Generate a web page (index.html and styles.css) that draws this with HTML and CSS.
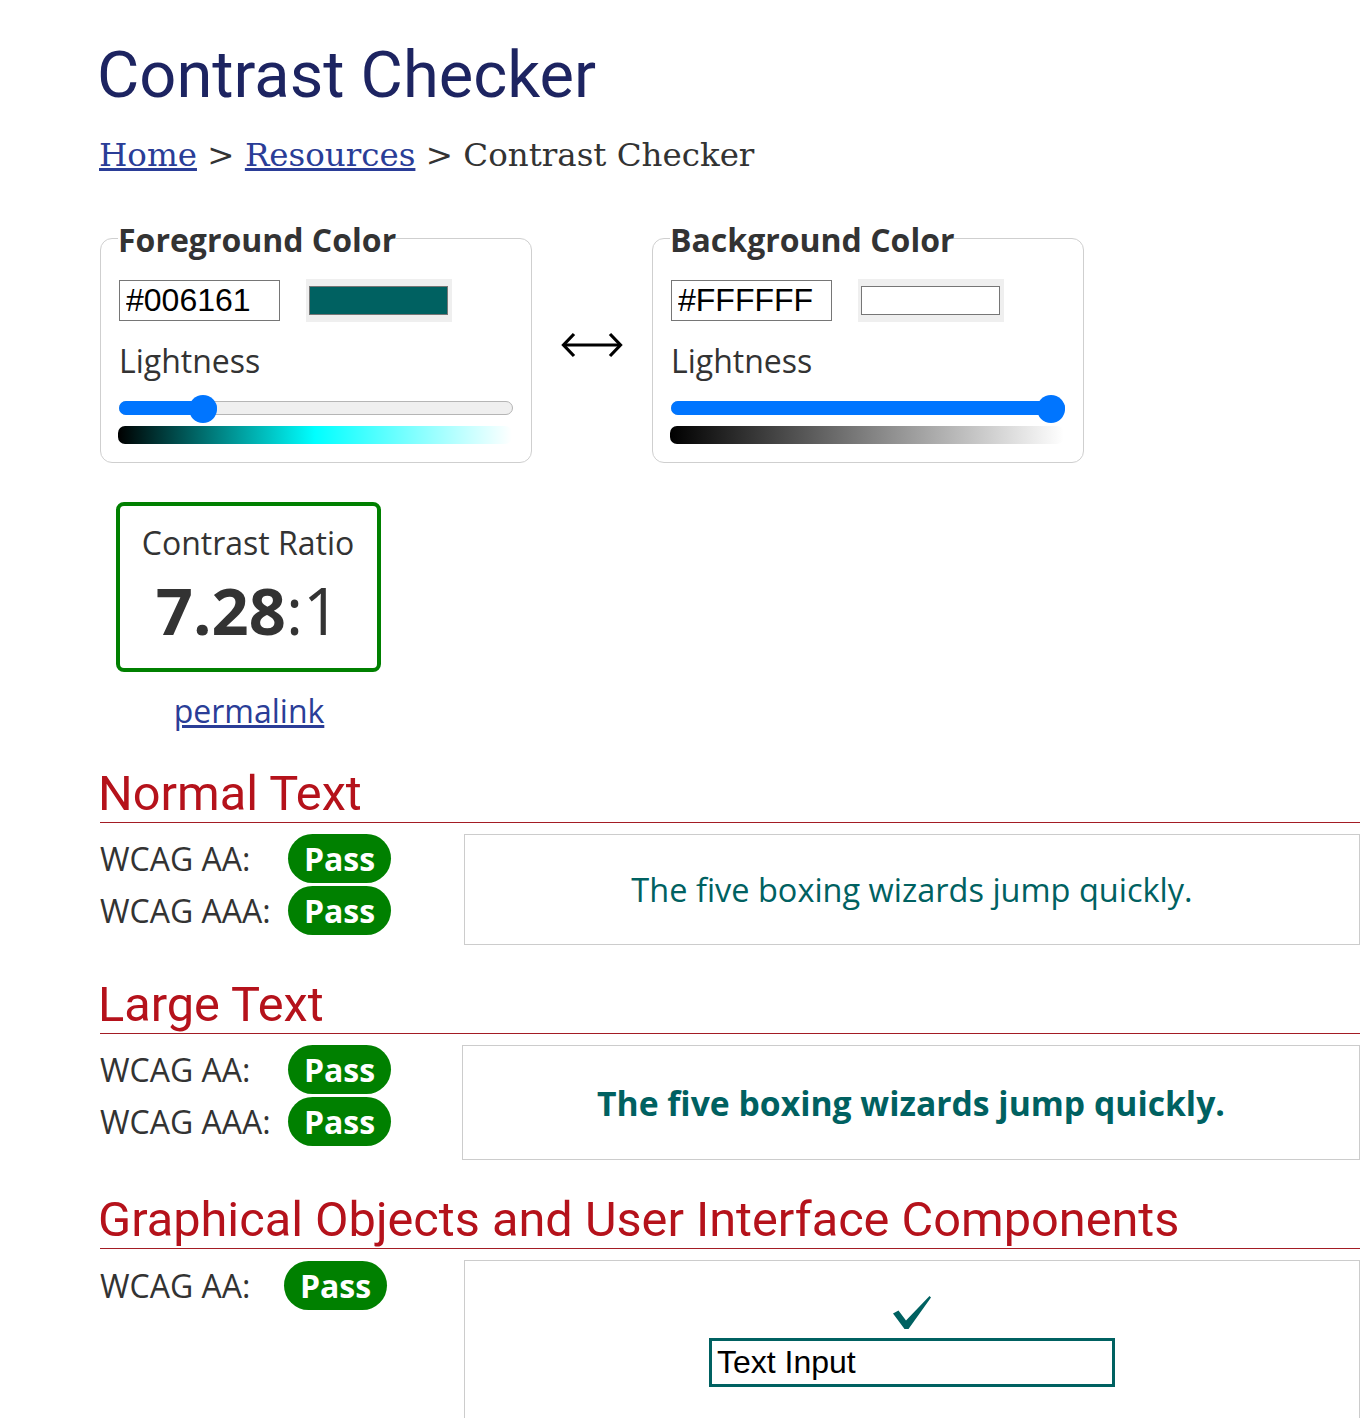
FILE: index.html
```html
<!DOCTYPE html>
<html lang="en">
<head>
<meta charset="utf-8">
<title>Contrast Checker</title>
<link rel="stylesheet" href="styles.css">
</head>
<body>
<main class="page">
  <h1 class="title">Contrast Checker</h1>
  <nav class="crumbs"><a href="#">Home</a> &gt; <a href="#">Resources</a> &gt; Contrast Checker</nav>

  <div class="pickers">
    <fieldset class="picker">
      <legend>Foreground Color</legend>
      <div class="hexrow">
        <input class="hex" type="text" value="#006161" aria-label="Foreground hex">
        <span class="swatch-wrap"><span class="swatch swatch-fg"></span></span>
      </div>
      <div class="light-label">Lightness</div>
      <div class="slider">
        <div class="track"></div>
        <div class="fill" style="width: 98px"></div>
        <div class="thumb" style="left: 70px"></div>
      </div>
      <div class="grad grad-fg"></div>
    </fieldset>

    <div class="swap">
      <svg width="62" height="28" viewBox="0 0 62 28" aria-label="swap colors">
        <path d="M3 14 H59" stroke="#000" stroke-width="3" fill="none"/>
        <path d="M13 3 L2.5 14 L13 25" stroke="#000" stroke-width="3.2" fill="none" stroke-linejoin="miter"/>
        <path d="M49 3 L59.5 14 L49 25" stroke="#000" stroke-width="3.2" fill="none" stroke-linejoin="miter"/>
      </svg>
    </div>

    <fieldset class="picker">
      <legend>Background Color</legend>
      <div class="hexrow">
        <input class="hex" type="text" value="#FFFFFF" aria-label="Background hex">
        <span class="swatch-wrap"><span class="swatch swatch-bg"></span></span>
      </div>
      <div class="light-label">Lightness</div>
      <div class="slider">
        <div class="track"></div>
        <div class="fill" style="width: 394px"></div>
        <div class="thumb" style="left: 366px"></div>
      </div>
      <div class="grad grad-bg"></div>
    </fieldset>
  </div>

  <div class="ratio-col">
    <div class="ratio">
      <div class="ratio-label">Contrast Ratio</div>
      <div class="ratio-value"><b>7.28</b>:1</div>
    </div>
    <a class="permalink" href="#">permalink</a>
  </div>

  <section class="result">
    <h2>Normal Text</h2>
    <div class="result-row">
      <div class="grades">
        <div class="grade"><span class="grade-label">WCAG AA:</span><span class="pass">Pass</span></div>
        <div class="grade"><span class="grade-label">WCAG AAA:</span><span class="pass">Pass</span></div>
      </div>
      <div class="sample sample-normal">The five boxing wizards jump quickly.</div>
    </div>
  </section>

  <section class="result">
    <h2>Large Text</h2>
    <div class="result-row">
      <div class="grades">
        <div class="grade"><span class="grade-label">WCAG AA:</span><span class="pass">Pass</span></div>
        <div class="grade"><span class="grade-label">WCAG AAA:</span><span class="pass">Pass</span></div>
      </div>
      <div class="sample sample-large">The five boxing wizards jump quickly.</div>
    </div>
  </section>

  <section class="result">
    <h2>Graphical Objects and User Interface Components</h2>
    <div class="result-row">
      <div class="grades grades-gfx">
        <div class="grade"><span class="grade-label">WCAG AA:</span><span class="pass">Pass</span></div>
      </div>
      <div class="sample sample-gfx">
        <svg class="check" width="40" height="36" viewBox="0 0 40 36" aria-hidden="true">
          <path d="M1 18.5 L6.5 15.5 L14 25.5 L37.5 1 L39 2.5 L16.5 34 L12.5 34 Z" fill="#006161"/>
        </svg>
        <div class="fake-input">Text Input</div>
      </div>
    </div>
  </section>
</main>
</body>
</html>
```

FILE: styles.css
```css
html, body {
  margin: 0;
  padding: 0;
  background: #fff;
  overflow-x: hidden;
}

body {
  font-family: "Open Sans", "DejaVu Sans", sans-serif;
  color: #333;
}

.page {
  width: 1260px;
  padding: 36px 0 0 100px;
}

.title {
  margin: 0;
  text-indent: -3px;
  font-family: Roboto, "Liberation Sans", sans-serif;
  font-weight: 400;
  font-size: 65px;
  line-height: 78px;
  color: #1d2461;
}

.crumbs {
  margin-top: 20px;
  font-family: "DejaVu Serif", "Liberation Serif", serif;
  font-size: 32.5px;
  line-height: 42px;
  color: #333;
  text-indent: -1px;
}

.crumbs a {
  color: #2a3d97;
}

a {
  color: #2a3d97;
}

.pickers {
  display: flex;
  align-items: stretch;
  margin-top: 42px;
}

.picker {
  width: 432px;
  box-sizing: border-box;
  margin: 0;
  padding: 21px 18px 18px 18px;
  border: 1px solid #cfcfcf;
  border-radius: 12px;
  min-width: 0;
}

.picker legend {
  padding: 4px 0 0 0;
  margin-left: -1px;
  font-weight: 700;
  font-size: 32px;
  line-height: 36px;
  color: #333;
}

.hexrow {
  display: flex;
  align-items: center;
  gap: 26px;
}

.hex {
  width: 161px;
  height: 41px;
  box-sizing: border-box;
  margin: 0;
  padding: 0 6px;
  border: 1px solid #767676;
  border-radius: 0;
  font-family: "Liberation Sans", Arial, sans-serif;
  font-size: 32px;
  color: #000;
  background: #fff;
  outline: none;
}

.swatch-wrap {
  display: flex;
  width: 146px;
  height: 43px;
  box-sizing: border-box;
  padding: 7px 4px 7px 3px;
  background: #efefef;
}

.swatch {
  flex: 1;
  border: 1px solid #767676;
}

.swatch-fg { background: #006161; }
.swatch-bg { background: #ffffff; }

.light-label {
  margin-top: 18px;
  font-size: 32px;
  line-height: 42px;
  color: #333;
}

.slider {
  position: relative;
  margin-top: 13px;
  height: 28px;
  width: 394px;
}

.track {
  position: absolute;
  left: 0;
  right: 0;
  top: 6px;
  height: 14px;
  box-sizing: border-box;
  border: 1px solid #b5b5b5;
  border-radius: 7px;
  background: #efefef;
}

.fill {
  position: absolute;
  left: 0;
  top: 6px;
  height: 14px;
  border-radius: 7px;
  background: #0075ff;
}

.thumb {
  position: absolute;
  top: 0;
  width: 28px;
  height: 28px;
  border-radius: 50%;
  background: #0075ff;
}

.grad {
  margin-top: 3px;
  height: 18px;
  width: 394px;
  margin-left: -1px;
  border-radius: 7px;
}

.grad-fg {
  background: linear-gradient(to right, #000 0%, #00b3b3 35%, #00ffff 50%, #80ffff 75%, #fff 100%);
}

.grad-bg {
  background: linear-gradient(to right, #000, #fff);
}

.swap {
  width: 120px;
  display: flex;
  align-items: center;
  justify-content: center;
}

.swap svg {
  margin-top: 9px;
}

.ratio-col {
  width: 298px;
  display: flex;
  flex-direction: column;
  align-items: center;
  margin-top: 39px;
}

.ratio {
  width: 265px;
  height: 170px;
  flex-shrink: 0;
  box-sizing: border-box;
  border: 4px solid #008000;
  border-radius: 8px;
  text-align: center;
  margin-left: -2px;
}

.ratio-label {
  margin-top: 16px;
  font-size: 32px;
  line-height: 42px;
}

.ratio-value {
  margin-top: 6px;
  font-size: 65px;
  line-height: 80px;
  color: #333;
}

.ratio-value b {
  font-weight: 700;
}

.permalink {
  margin-top: 18px;
  font-size: 32px;
  line-height: 42px;
}

.result h2 {
  margin: 0;
  text-indent: -2px;
  font-family: Roboto, "Liberation Sans", sans-serif;
  font-weight: 400;
  font-size: 48.7px;
  line-height: 57px;
  color: #b5121b;
  border-bottom: 1px solid #a31c24;
}

.result {
  margin-top: 31px;
}

.result:first-of-type {
  margin-top: 33px;
}

.result-row {
  display: flex;
  align-items: flex-start;
  margin-top: 11px;
}

.grades {
  width: 364px;
  display: flex;
  flex-direction: column;
  gap: 3px;
}

.grade {
  display: flex;
  align-items: center;
  height: 49px;
}

.grade-label {
  width: 188px;
  font-size: 32px;
  line-height: 42px;
  color: #333;
}

.pass {
  display: inline-flex;
  align-items: center;
  justify-content: center;
  width: 103px;
  height: 49px;
  border-radius: 25px;
  background: #008000;
  color: #fff;
  font-weight: 700;
  font-size: 32px;
}

.grades-gfx .grade-label {
  width: 184px;
}

.grades-gfx {
  padding-top: 1px;
}

.sample {
  flex: 1;
  box-sizing: border-box;
  border: 1px solid #cccccc;
  display: flex;
  align-items: center;
  justify-content: center;
  color: #006161;
}

.sample-normal {
  height: 111px;
  font-size: 32.5px;
}

.sample-large {
  height: 115px;
  margin-left: -2px;
  font-size: 33.7px;
  font-weight: 700;
}

.sample-gfx {
  height: 200px;
  flex-direction: column;
  justify-content: flex-start;
  padding-top: 34px;
}

.check {
  display: block;
}

.fake-input {
  margin-top: 7px;
  width: 406px;
  height: 49px;
  box-sizing: border-box;
  border: 3px solid #006161;
  padding-left: 5px;
  font-family: "Liberation Sans", Arial, sans-serif;
  font-size: 32px;
  line-height: 43px;
  color: #000;
}
```
